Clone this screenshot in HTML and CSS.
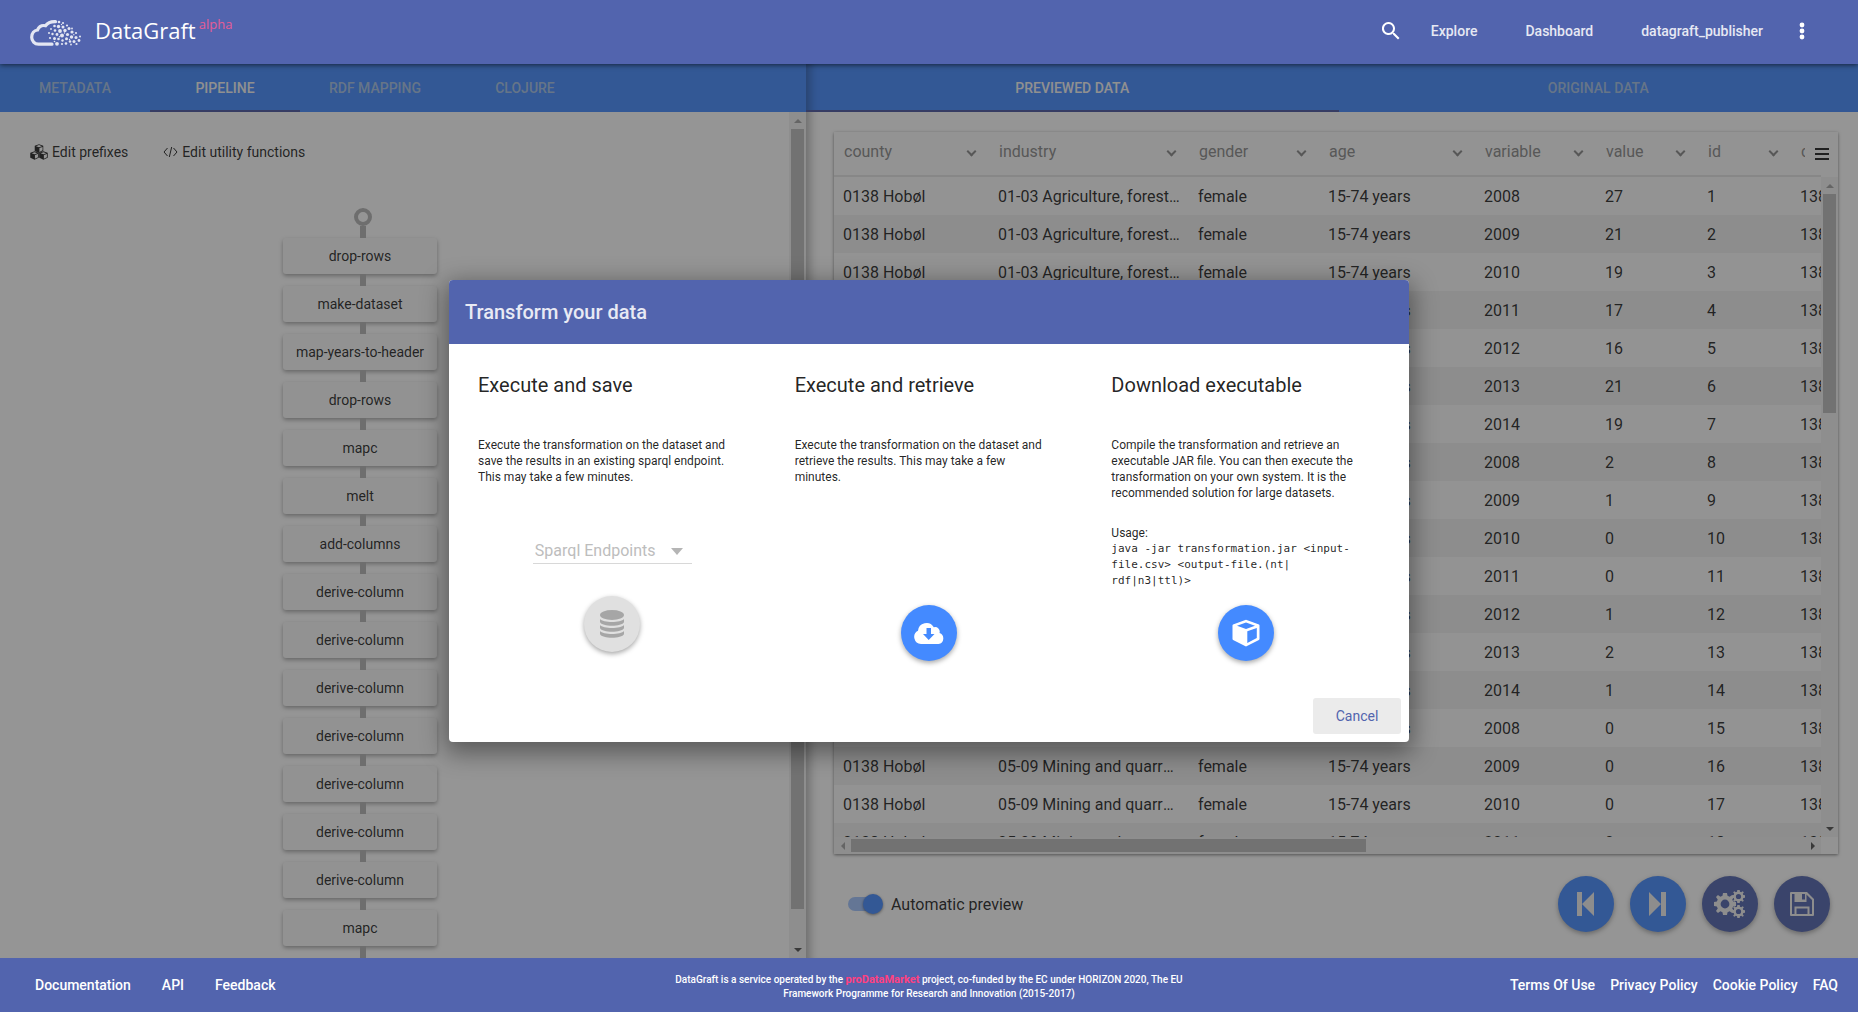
FILE: index.html
```html
<!DOCTYPE html>
<html lang="en">
<head>
<meta charset="utf-8">
<title>DataGraft</title>
<link rel="stylesheet" href="styles.css">
</head>
<body>
<svg class="defs" aria-hidden="true">
  <symbol id="cube" viewBox="0 0 28 28">
    <path fill-rule="evenodd" d="M14 .8 27 5.500q.5.300.5 1V20q0 .7-.6 1L14 27.500 1.100 21Q.5 20.700.5 20V6.500q0-.7.5-1zM14 3.400 5 6.700 14 10 23 6.700zM15.300 12.300V24L24.800 19V8.900z"/>
  </symbol>
  <symbol id="gear" viewBox="-10 -10 20 20">
    <path fill-rule="evenodd" d="M-1.800-10h3.600l.5 2.600 1.900.8L6.400-8.200 8.200-6.400 6.600-4.200l.8 1.900 2.600.5v3.600l-2.600.5-.8 1.900 1.600 2.200-1.800 1.800-2.200-1.600-1.900.8-.5 2.600h-3.600l-.5-2.600-1.900-.8-2.200 1.600-1.800-1.800 1.600-2.200-.8-1.900-2.600-.5v-3.600l2.600-.5.8-1.900-1.600-2.200 1.800-1.800 2.200 1.600 1.900-.8zM0-4a4 4 0 1 0 0 8 4 4 0 1 0 0-8z"/>
  </symbol>
</svg>

<header class="topbar">
  <a class="brand" href="#">
    <svg class="brand-logo" viewBox="0 0 52 26" aria-hidden="true">
      <path d="M22 24.200H8.500C4.500 24.200 1.700 21 1.700 17.300c0-4 2.500-6.800 5.800-7.300C9 6.500 12 5 15.500 5.700 18 2.300 21.500 1.500 25.500 1.600" fill="none" stroke="currentColor" stroke-width="3.200" stroke-linecap="round"/>
      <g fill="currentColor">
        <circle cx="29" cy="2" r="1.300"/><circle cx="33" cy="3" r="1.100"/><circle cx="24.500" cy="6" r="1.300"/><circle cx="28.500" cy="6.500" r="1.700"/><circle cx="33" cy="7" r="1.500"/><circle cx="37" cy="5.500" r="1.100"/><circle cx="21" cy="9" r=".9"/><circle cx="25" cy="10.500" r="1.300"/><circle cx="30" cy="11" r="1.900"/><circle cx="35" cy="10.500" r="1.700"/><circle cx="39" cy="8.500" r="1.500"/><circle cx="19" cy="13" r="1"/><circle cx="22.500" cy="14" r="1.200"/><circle cx="27" cy="14.500" r="1.400"/><circle cx="32" cy="15.500" r="2"/><circle cx="37.500" cy="14.500" r="1.600"/><circle cx="42" cy="12" r="1.600"/><circle cx="46" cy="13" r="1.100"/><circle cx="20" cy="18" r="1.100"/><circle cx="24.500" cy="18.500" r="1.500"/><circle cx="28.500" cy="19" r="1.300"/><circle cx="36.500" cy="18.800" r="1.500"/><circle cx="41.500" cy="17" r="1.700"/><circle cx="46" cy="17.500" r="1.500"/><circle cx="50" cy="16.500" r="1"/><circle cx="32.500" cy="20.500" r="1.200"/><circle cx="27" cy="23.800" r="1.900"/><circle cx="32" cy="24" r="1.100"/><circle cx="36" cy="23.500" r="1.300"/><circle cx="40" cy="21.500" r="1.300"/><circle cx="44" cy="21.500" r="1.500"/><circle cx="49" cy="20.500" r="1.400"/><circle cx="41" cy="24.500" r=".9"/><circle cx="46.500" cy="24" r="1.100"/>
        <circle cx="42" cy="8.500" r=".9"/><circle cx="34.500" cy="13" r=".7"/><circle cx="29.500" cy="16.800" r=".7"/><circle cx="39.500" cy="19.500" r=".7"/><circle cx="43.800" cy="14.800" r=".7"/><circle cx="31.500" cy="4.500" r=".7"/><circle cx="24.500" cy="21.500" r=".8"/>
      </g>
    </svg>
    <span class="brand-name">DataGraft</span><span class="brand-tag">alpha</span>
  </a>
  <nav class="topnav">
    <button class="icon-button" aria-label="Search"><svg viewBox="0 0 18 18" width="18" height="18"><path fill-rule="evenodd" d="M6.500 0a6.500 6.500 0 0 1 4.900 10.700l.3.300h.8l5 5-1.500 1.500-5-5v-.8l-.3-.3A6.500 6.500 0 1 1 6.500 0zm0 2a4.500 4.500 0 1 0 0 9 4.500 4.500 0 0 0 0-9z"/></svg></button>
    <a href="#">Explore</a>
    <a href="#">Dashboard</a>
    <a href="#">datagraft_publisher</a>
    <button class="icon-button" aria-label="More"><svg viewBox="0 0 6 18" width="6" height="18"><circle cx="3" cy="3" r="2.400"/><circle cx="3" cy="9" r="2.400"/><circle cx="3" cy="15" r="2.400"/></svg></button>
  </nav>
</header>

<main class="workspace">
  <section class="editor">
    <nav class="tabs">
      <a class="tab" href="#">Metadata</a>
      <a class="tab tab-active" href="#">Pipeline</a>
      <a class="tab" href="#">RDF mapping</a>
      <a class="tab" href="#">Clojure</a>
    </nav>
    <div class="editor-view">
      <div class="editor-content">
        <div class="editor-tools">
          <button class="tool"><svg viewBox="0 0 58 52" width="18" height="16" aria-hidden="true"><use href="#cube" x="14" y="0" width="30" height="30"/><use href="#cube" x="0" y="23" width="29" height="29"/><use href="#cube" x="29" y="23" width="29" height="29"/></svg>Edit prefixes</button>
          <button class="tool"><svg viewBox="0 0 15 12" width="15" height="12" aria-hidden="true"><path d="M4.500 2 1 6l3.500 4M10.500 2 14 6l-3.500 4M8.700 1 6.300 11" fill="none" stroke="currentColor"/></svg>Edit utility functions</button>
        </div>
        <div class="pipeline">
          <span class="pipeline-start"></span>
          <button class="step">drop-rows</button>
          <button class="step">make-dataset</button>
          <button class="step">map-years-to-header</button>
          <button class="step">drop-rows</button>
          <button class="step">mapc</button>
          <button class="step">melt</button>
          <button class="step">add-columns</button>
          <button class="step">derive-column</button>
          <button class="step">derive-column</button>
          <button class="step">derive-column</button>
          <button class="step">derive-column</button>
          <button class="step">derive-column</button>
          <button class="step">derive-column</button>
          <button class="step">derive-column</button>
          <button class="step">mapc</button>
        </div>
      </div>
      <div class="scrollbar scrollbar-v" aria-hidden="true"><i class="arrow arrow-up"></i><div class="track"><div class="thumb thumb-editor"></div></div><i class="arrow arrow-down"></i></div>
    </div>
  </section>

  <section class="preview">
    <nav class="tabs tabs-stretch">
      <a class="tab tab-active" href="#">Previewed data</a>
      <a class="tab" href="#">Original data</a>
    </nav>
    <div class="preview-body">
      <div class="grid-card">
        <button class="grid-menu" aria-label="Grid menu"><svg viewBox="0 0 14 12" width="14" height="12"><path d="M0 0h14v2H0zM0 5h14v2H0zM0 10h14v2H0z"/></svg></button>
        <div class="grid-main">
          <div class="grid-scroll">
            <table class="grid">
              <colgroup><col class="c155"><col class="c200"><col class="c130"><col class="c156"><col class="c121"><col class="c102"><col class="c93"><col></colgroup>
              <thead><tr><th>county</th><th>industry</th><th>gender</th><th>age</th><th>variable</th><th>value</th><th>id</th><th>c</th></tr></thead>
              <tbody id="rows"></tbody>
            </table>
          </div>
          <div class="scrollbar scrollbar-v" aria-hidden="true"><i class="arrow arrow-up"></i><div class="track"><div class="thumb thumb-rows"></div></div><i class="arrow arrow-down"></i></div>
        </div>
        <div class="grid-foot" aria-hidden="true">
          <div class="scrollbar scrollbar-h"><i class="arrow arrow-left"></i><div class="track"><div class="thumb thumb-cols"></div></div><i class="arrow arrow-right"></i></div>
        </div>
      </div>
      <div class="preview-actions">
        <label class="switch"><input type="checkbox" checked><span>Automatic preview</span></label>
        <div class="fabs">
          <button class="fab fab-blue" aria-label="First"><svg viewBox="0 0 18 24" width="18" height="24"><path d="M0 0h5v24H0zM17 0v24L5 12z"/></svg></button>
          <button class="fab fab-blue" aria-label="Last"><svg viewBox="0 0 18 24" width="18" height="24"><path d="M12 0h5v24h-5zM0 0v24l12-12z"/></svg></button>
          <button class="fab fab-indigo" aria-label="Transform"><svg viewBox="0 0 32 30" width="32" height="30"><use href="#gear" x="0" y="4" width="22" height="22"/><use href="#gear" x="18" y="1" width="13" height="13"/><use href="#gear" x="18" y="16" width="13" height="13"/></svg></button>
          <button class="fab fab-indigo" aria-label="Save"><svg viewBox="0 0 26 26" width="26" height="26"><path fill-rule="evenodd" d="M1 2a1 1 0 0 1 1-1h16l7 7v16a1 1 0 0 1-1 1H2a1 1 0 0 1-1-1zm2 1v20h2.500v-7.500h15V23H23V9l-5.500-5.500V11h-12V3zm10 0v5.500h3V3zM7.500 17.500V23h11v-5.500z"/></svg></button>
        </div>
      </div>
    </div>
  </section>

  <div class="backdrop"></div>
  <div class="dialog-layer">
    <div class="dialog" role="dialog" aria-labelledby="dialog-title">
      <h2 class="dialog-head" id="dialog-title">Transform your data</h2>
      <div class="dialog-body">
        <section class="option">
          <h3>Execute and save</h3>
          <p>Execute the transformation on the dataset and save the results in an existing sparql endpoint. This may take a few minutes.</p>
          <div class="option-run option-run-save">
            <div class="endpoint-field">
              <select class="endpoint" aria-label="Sparql Endpoints" disabled><option>Sparql Endpoints</option></select>
            </div>
            <button class="fab fab-disabled" aria-label="Save" disabled><svg viewBox="0 0 24 28" width="24" height="28"><ellipse cx="12" cy="5" rx="12" ry="5"/><path d="M0 9c3 4 21 4 24 0v3c-2 5-22 5-24 0zM0 15c3 4 21 4 24 0v3c-2 5-22 5-24 0zM0 21c3 4 21 4 24 0v3c-2 5-22 5-24 0z"/></svg></button>
          </div>
        </section>
        <section class="option">
          <h3>Execute and retrieve</h3>
          <p>Execute the transformation on the dataset and retrieve the results. This may take a few minutes.</p>
          <div class="option-run">
            <button class="fab fab-bright" aria-label="Retrieve"><svg viewBox="0 0 30 22" width="30" height="22"><path fill-rule="evenodd" d="M7 22a7 7 0 0 1-3-13.200A8.500 8.500 0 0 1 19.800 5.200 4.600 4.600 0 0 1 25.500 11 5.700 5.700 0 0 1 24.500 22zM12.500 6v6H9l5.700 6 5.800-6H17V6z"/></svg></button>
          </div>
        </section>
        <section class="option">
          <h3>Download executable</h3>
          <p>Compile the transformation and retrieve an executable JAR file. You can then execute the transformation on your own system. It is the recommended solution for large datasets.</p>
          <p class="usage">Usage:<code>java -jar transformation.jar &lt;input-file.csv&gt; &lt;output-file.(nt|<wbr>rdf|n3|ttl)&gt;</code></p>
          <div class="option-run">
            <button class="fab fab-bright" aria-label="Download"><svg width="28" height="28"><use href="#cube"/></svg></button>
          </div>
        </section>
      </div>
      <div class="dialog-actions"><button class="cancel">Cancel</button></div>
    </div>
  </div>
</main>

<footer class="footer">
  <nav class="footer-left"><a href="#">Documentation</a><a href="#">API</a><a href="#">Feedback</a></nav>
  <p class="credit">DataGraft is a service operated by the <a href="#">proDataMarket</a> project, co-funded by the EC under HORIZON 2020, The EU Framework Programme for Research and Innovation (2015-2017)</p>
  <nav class="footer-right"><a href="#">Terms Of Use</a><a href="#">Privacy Policy</a><a href="#">Cookie Policy</a><a href="#">FAQ</a></nav>
</footer>
<script src="rows.js"></script>
</body>
</html>
```
FILE: rows.js
```js
const values = [27, 21, 19, 17, 16, 21, 19, 2, 1, 0, 0, 1, 2, 1, 0, 0, 0, 0];
const body = document.getElementById('rows');
values.forEach((value, i) => {
  const industry = i < 7 ? '01-03 Agriculture, forestry and fishing' : '05-09 Mining and quarrying and extraction';
  const cells = ['0138 Hobøl', industry, 'female', '15-74 years', 2008 + i % 7, value, i + 1, '138'];
  const row = body.insertRow();
  cells.forEach(text => { row.insertCell().textContent = text; });
});
```
FILE: styles.css
```css
*, *::before, *::after { box-sizing: border-box; }

body {
  margin: 0;
  height: 100vh;
  display: flex;
  flex-direction: column;
  overflow: hidden;
  font-family: Roboto, sans-serif;
  font-size: 14px;
  color: rgba(0, 0, 0, 0.87);
  background: #fff;
}

button {
  font: inherit;
  color: inherit;
  border: 0;
  padding: 0;
  background: none;
}

a { color: inherit; text-decoration: none; }
svg { fill: currentColor; flex: none; }
.defs { position: absolute; width: 0; height: 0; }

/* Top bar */
.topbar {
  position: relative;
  z-index: 2;
  flex: none;
  height: 64px;
  padding: 0 53px 2px 30px;
  display: flex;
  align-items: center;
  justify-content: space-between;
  background: #5264ae;
  color: #fff;
  box-shadow: 0 1px 5px rgba(0, 0, 0, 0.6);
}
.brand { display: flex; align-items: center; }
.brand-logo { width: 52px; height: 26px; margin: 4px 13px 0 0; color: #e3e6f2; }
.brand-name { font-family: "Open Sans", sans-serif; font-size: 22px; font-weight: 500; line-height: 28px; padding-bottom: 2px; }
.brand-tag { margin: 0 0 14px 3px; font-family: "Open Sans", sans-serif; font-size: 13px; color: #e75c96; }
.topnav { display: flex; align-items: center; font-weight: 500; color: #e6e8f3; }
.topnav a { margin-right: 48px; }
.topnav a:last-of-type { margin-right: 36px; }
.icon-button { display: flex; color: #fff; }
.icon-button:first-child { margin-right: 31px; }

/* Workspace */
.workspace {
  position: relative;
  flex: 1;
  min-height: 0;
  display: flex;
}
.editor {
  flex: 806 1 0;
  min-width: 0;
  display: flex;
  flex-direction: column;
}
.preview {
  isolation: isolate;
  flex: 1052 1 0;
  min-width: 0;
  display: flex;
  flex-direction: column;
  box-shadow: inset 12px 0 10px -8px rgba(0, 0, 0, 0.3);
}
.tabs {
  flex: none;
  height: 48px;
  display: flex;
  background: #448aff;
}
.tab {
  width: 150px;
  display: flex;
  align-items: center;
  justify-content: center;
  font-weight: 500;
  text-transform: uppercase;
  color: #a6c2e6;
}
.tab-active { color: #f5f5f5; box-shadow: inset 0 -2px #4a55a0; }
.tabs-stretch { box-shadow: inset 12px 0 10px -8px rgba(0, 0, 0, 0.3); }
.tabs-stretch .tab { width: auto; flex: 1 1 auto; }

.editor-view { flex: 1; min-height: 0; display: flex; }
.editor-content { flex: 1; min-width: 0; overflow: hidden; }
.editor-tools { display: flex; gap: 35px; padding: 30px 30px 0; height: 96px; align-items: flex-start; }
.tool { display: flex; align-items: center; gap: 4px; height: 20px; }

.pipeline { display: flex; flex-direction: column; align-items: center; margin-right: 69px; }
.pipeline-start {
  width: 18px;
  height: 18px;
  margin: 0 0 12px 6px;
  border: 4px solid #b5b5b5;
  border-radius: 50%;
}
.step {
  position: relative;
  flex: none;
  width: 154px;
  height: 36px;
  margin-bottom: 12px;
  border-radius: 3px;
  background: #fafafa;
  box-shadow: 0 2px 4px rgba(0, 0, 0, 0.35);
}
.step::before, .step:last-child::after {
  content: "";
  position: absolute;
  left: 77px;
  top: -12px;
  width: 6px;
  height: 12px;
  background: #b5b5b5;
}
.step:last-child::after { top: 36px; }

/* Scrollbars */
.scrollbar { flex: none; display: flex; background: #f1f1f1; align-items: center; }
.scrollbar-v { width: 17px; flex-direction: column; }
.scrollbar-h { flex: 1; height: 17px; }
.track { flex: 1; display: flex; }
.scrollbar-v .track { flex-direction: column; }
.thumb { background: #bdbdbd; }
.scrollbar-v .thumb { width: 13px; }
.scrollbar-h .thumb { height: 13px; }
.thumb-editor { height: 96%; }
.thumb-rows { height: 35%; }
.thumb-cols { width: 54%; }
.arrow { width: 17px; height: 17px; display: flex; align-items: center; justify-content: center; }
.arrow::before { content: ""; border: 4px solid transparent; }
.arrow-up::before { border-top: 0; border-bottom-color: #a3a3a3; }
.arrow-down::before { border-bottom: 0; border-top-color: #505050; }
.arrow-left::before { border-left: 0; border-right-color: #a3a3a3; }
.arrow-right::before { border-right: 0; border-left-color: #505050; }

/* Data preview */
.preview-body { flex: 1; min-height: 0; padding: 20px 20px 26px 28px; display: flex; flex-direction: column; }
.grid-card {
  position: relative;
  flex: 1;
  min-height: 0;
  display: flex;
  flex-direction: column;
  background: #fcfcfc;
  box-shadow: 0 1px 3px rgba(0, 0, 0, 0.5);
  font-size: 16px;
}
.grid-menu {
  position: absolute;
  z-index: 1;
  right: 0;
  top: 0;
  width: 33px;
  height: 43px;
  padding-right: 9px;
  display: flex;
  align-items: center;
  justify-content: flex-end;
  background: #fcfcfc;
}
.grid-main { flex: 1; min-height: 0; display: flex; overflow: hidden; }
.grid-main .scrollbar { margin-top: 45px; }
.grid-scroll { flex: 1; min-width: 0; overflow: hidden; }
.grid { width: 100%; table-layout: fixed; border-collapse: separate; border-spacing: 0; }
.c155 { width: 155px; }
.c200 { width: 200px; }
.c130 { width: 130px; }
.c156 { width: 156px; }
.c121 { width: 121px; }
.c102 { width: 102px; }
.c93 { width: 93px; }
.grid th {
  position: relative;
  height: 45px;
  padding: 0 10px 4px;
  border-bottom: 2px solid #e4e4e4;
  text-align: left;
  font-weight: 400;
  color: #8a8a8a;
}
.grid th::after {
  content: "";
  position: absolute;
  right: 14px;
  top: 16px;
  width: 7px;
  height: 7px;
  border: solid #888;
  border-width: 0 2px 2px 0;
  transform: rotate(45deg);
}
.grid th:last-child::after { content: none; }
.grid td {
  height: 38px;
  padding: 0 8px 0 9px;
  overflow: hidden;
  white-space: nowrap;
  text-overflow: ellipsis;
}
.grid td:last-child, .grid th:last-child { padding-right: 0; text-overflow: clip; }
.grid tbody tr:nth-child(even) { background: #f0f0f0; }
.grid-foot { flex: none; display: flex; padding-right: 17px; }

.preview-actions { flex: none; height: 78px; padding: 22px 8px 0 14px; display: flex; align-items: center; justify-content: space-between; }
.switch { display: flex; align-items: center; gap: 8px; font-size: 16px; }
.switch input {
  appearance: none;
  position: relative;
  width: 35px;
  height: 20px;
  margin: 0;
}
.switch input::before {
  content: "";
  position: absolute;
  inset: 3px 3px 3px 0;
  border-radius: 7px;
  background: #a1c4ff;
}
.switch input::after {
  content: "";
  position: absolute;
  right: 0;
  top: 0;
  width: 20px;
  height: 20px;
  border-radius: 50%;
  background: #448aff;
  box-shadow: 0 1px 3px rgba(0, 0, 0, 0.5);
}
.fabs { display: flex; gap: 16px; }
.fab {
  width: 56px;
  height: 56px;
  flex: none;
  display: flex;
  align-items: center;
  justify-content: center;
  border-radius: 50%;
  color: #fff;
  box-shadow: 0 2px 5px rgba(0, 0, 0, 0.35);
}
.fabs .fab { color: #f0f0f0; }
.fab-blue { background: #448aff; }
.fab-indigo { background: #5264ae; }
.fab-bright { background: #448aff; }
.fab-disabled { background: #e0e0e0; color: #a6a6a6; }

/* Dialog */
.backdrop { position: absolute; inset: 0; background: rgba(33, 33, 33, 0.48); }
.dialog-layer { position: absolute; inset: 0; display: flex; align-items: center; justify-content: center; }
.dialog {
  width: 960px;
  max-width: 90%;
  border-radius: 4px;
  overflow: hidden;
  background: #fff;
  box-shadow: 0 7px 24px 4px rgba(0, 0, 0, 0.4);
}
.dialog-head {
  margin: 0;
  height: 64px;
  padding: 0 16px;
  line-height: 64px;
  font-size: 20px;
  font-weight: 500;
  color: #e8eaf4;
  background: #5264ae;
}
.dialog-body { display: flex; padding: 0 5px; }
.option {
  flex: 1;
  min-width: 0;
  padding: 25px 24px 29px;
  display: flex;
  flex-direction: column;
  font-size: 12px;
  line-height: 16px;
}
.option h3 { margin: 0 0 36px; font-size: 20px; line-height: 32px; font-weight: 400; }
.option p { margin: 0; max-width: 256px; }
.option .usage { margin-top: 24px; }
.usage code { display: block; font-family: "DejaVu Sans Mono", monospace; font-size: 11px; }
.option-run { margin-top: auto; padding-top: 16px; display: flex; flex-direction: column; align-items: center; }
.option-run-save { padding-bottom: 9px; gap: 32px; }
.endpoint-field { position: relative; display: flex; }
.endpoint-field::after {
  content: "";
  position: absolute;
  right: 9px;
  top: 10px;
  border: solid transparent;
  border-width: 7px 6px 0;
  border-top-color: #b5b5b5;
}
.endpoint {
  appearance: none;
  width: 159px;
  height: 26px;
  padding: 0 2px;
  border: 0;
  border-bottom: 1px solid #d8d8d8;
  border-radius: 0;
  opacity: 1;
  font: 16px Roboto, sans-serif;
  color: #bdbdbd;
  background: none;
}
.dialog-actions { display: flex; justify-content: flex-end; padding: 8px; }
.cancel { width: 88px; height: 36px; border-radius: 3px; background: #ebebeb; color: #5264ae; }

/* Footer */
.footer {
  flex: none;
  height: 54px;
  padding: 0 20px;
  display: grid;
  grid-template-columns: 1fr 520px 1fr;
  align-items: center;
  background: #5264ae;
  color: #fff;
  font-weight: 500;
}
.footer-left { display: flex; gap: 31px; padding-left: 15px; }
.footer-right { display: flex; justify-content: flex-end; gap: 15px; }
.credit { margin: 0; padding-top: 4px; text-align: center; font-size: 10px; line-height: 14px; }
.credit a { color: #ff4081; font-size: 11px; font-weight: 700; }
```
